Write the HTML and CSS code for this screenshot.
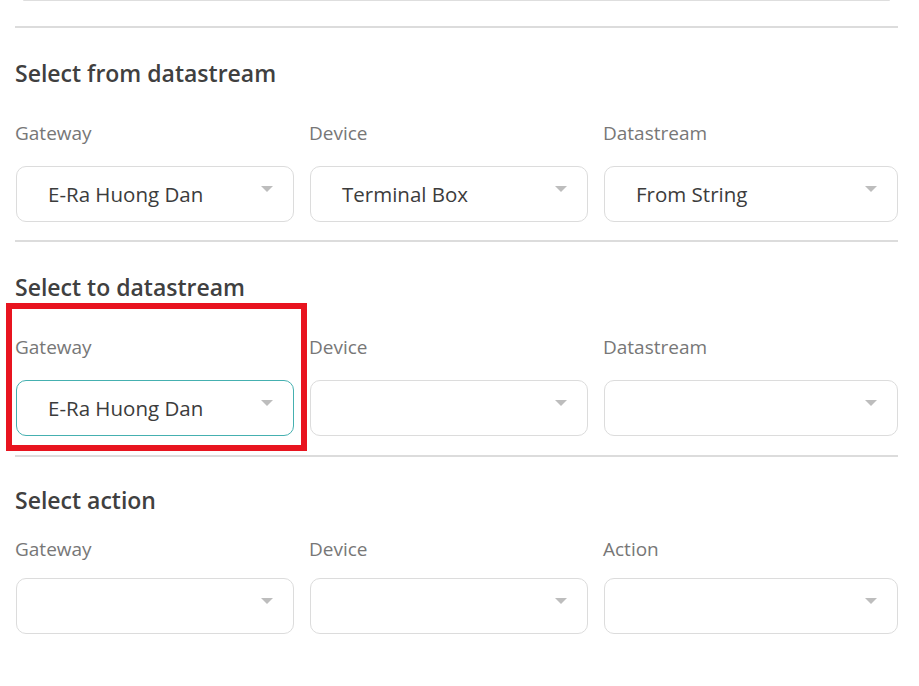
FILE: index.html
```html
<!DOCTYPE html>
<html>
<head>
<meta charset="utf-8">
<link rel="stylesheet" href="styles.css">
</head>
<body>
<div class="page">
  <div class="prev-field"></div>
  <div class="divider first"></div>

  <section class="section">
    <h2 class="heading">Select from datastream</h2>
    <div class="row">
      <div class="field">
        <div class="label">Gateway</div>
        <div class="select"><span class="value">E-Ra Huong Dan</span><span class="arrow"></span></div>
      </div>
      <div class="field">
        <div class="label">Device</div>
        <div class="select"><span class="value">Terminal Box</span><span class="arrow"></span></div>
      </div>
      <div class="field">
        <div class="label">Datastream</div>
        <div class="select"><span class="value">From String</span><span class="arrow"></span></div>
      </div>
    </div>
  </section>
  <div class="divider"></div>

  <section class="section">
    <h2 class="heading">Select to datastream</h2>
    <div class="row">
      <div class="field">
        <div class="label">Gateway</div>
        <div class="select focused"><span class="value">E-Ra Huong Dan</span><span class="arrow"></span></div>
        <div class="annotation"></div>
      </div>
      <div class="field">
        <div class="label">Device</div>
        <div class="select"><span class="value"></span><span class="arrow"></span></div>
      </div>
      <div class="field">
        <div class="label">Datastream</div>
        <div class="select"><span class="value"></span><span class="arrow"></span></div>
      </div>
    </div>
  </section>
  <div class="divider last"></div>

  <section class="section compact">
    <h2 class="heading">Select action</h2>
    <div class="row">
      <div class="field">
        <div class="label">Gateway</div>
        <div class="select"><span class="value"></span><span class="arrow"></span></div>
      </div>
      <div class="field">
        <div class="label">Device</div>
        <div class="select"><span class="value"></span><span class="arrow"></span></div>
      </div>
      <div class="field">
        <div class="label">Action</div>
        <div class="select"><span class="value"></span><span class="arrow"></span></div>
      </div>
    </div>
  </section>
</div>
</body>
</html>
```

FILE: styles.css
```css
html, body {
  margin: 0;
  padding: 0;
  background: #ffffff;
}

body {
  font-family: "Open Sans", "Noto Sans", "Liberation Sans", sans-serif;
  color: #333333;
}

.page {
  width: 882px;
  margin-left: 16px;
}

.prev-field {
  height: 0;
  margin: 0 8px 0 7px;
  border-bottom: 1px solid #dedede;
  border-radius: 0 0 8px 8px;
}

.divider {
  height: 2px;
  background: #dcdcdc;
  margin: 18px 0 0 -1px;
}

.divider.first {
  margin-top: 25px;
}

.divider.last {
  margin-top: 19px;
}

.heading {
  margin: 30px 0 0 -1px;
  font-size: 23px;
  line-height: 30px;
  font-weight: 600;
  color: #404040;
}

.row {
  display: grid;
  grid-template-columns: 278px 278px 1fr;
  column-gap: 16px;
  margin-top: 33px;
}

.field {
  position: relative;
  display: flex;
  flex-direction: column;
}

.label {
  font-size: 19px;
  line-height: 24px;
  color: #777777;
  margin-left: -1px;
}

.select {
  margin-top: 21px;
  height: 54px;
  border: 1px solid #dcdcdc;
  border-radius: 10px;
  display: flex;
  align-items: center;
  padding: 0 20px 0 31px;
  background: #ffffff;
}

.select.focused {
  border-color: #45b0b0;
}

.value {
  flex: 1;
  font-size: 20.5px;
  color: #3c3c3c;
}

.arrow {
  width: 0;
  height: 0;
  border-left: 6px solid transparent;
  border-right: 6px solid transparent;
  border-top: 6px solid #bdbdbd;
  margin-top: -10px;
}

.compact .heading {
  margin-top: 28px;
}

.compact .row {
  margin-top: 22px;
}

.compact .select {
  margin-top: 17px;
}

.annotation {
  position: absolute;
  left: -10px;
  right: -13px;
  top: -32px;
  bottom: -15px;
  border: 6px solid #e8141f;
  pointer-events: none;
}
```
